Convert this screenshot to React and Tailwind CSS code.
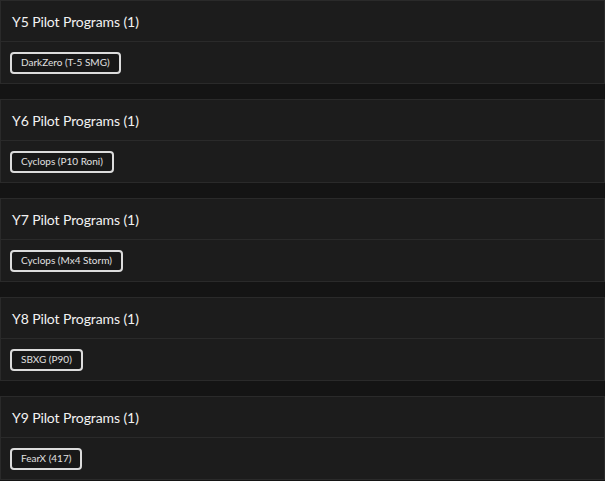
const groups = [
  { year: "Y5", items: ["DarkZero (T-5 SMG)"] },
  { year: "Y6", items: ["Cyclops (P10 Roni)"] },
  { year: "Y7", items: ["Cyclops (Mx4 Storm)"] },
  { year: "Y8", items: ["SBXG (P90)"] },
  { year: "Y9", items: ["FearX (417)"] },
];

export default function App() {
  return (
    <div className="min-h-screen w-full bg-[#141414] flex flex-col gap-[15px]" style={{ fontFamily: "Lato, 'Noto Sans', sans-serif" }}>
      {groups.map((g) => (
        <section key={g.year} className="h-[84px] bg-[#1c1c1c] border border-[#2a2a2a] flex flex-col">
          <div className="h-[41px] px-[11px] flex items-center border-b border-[#2a2a2a]">
            <h2 className="text-[14px] font-normal text-[#f2f2f2] tracking-[-0.1px]">
              {g.year} Pilot Programs ({g.items.length})
            </h2>
          </div>
          <div className="flex-1 px-[9px] flex items-center gap-2">
            {g.items.map((item) => (
              <span
                key={item}
                className="h-[22px] px-[9px] flex items-center rounded-[4px] border-2 border-[#dcdcdc] bg-[#181818] text-[10px] text-[#e0e0e0]"
              >
                {item}
              </span>
            ))}
          </div>
        </section>
      ))}
    </div>
  );
}
